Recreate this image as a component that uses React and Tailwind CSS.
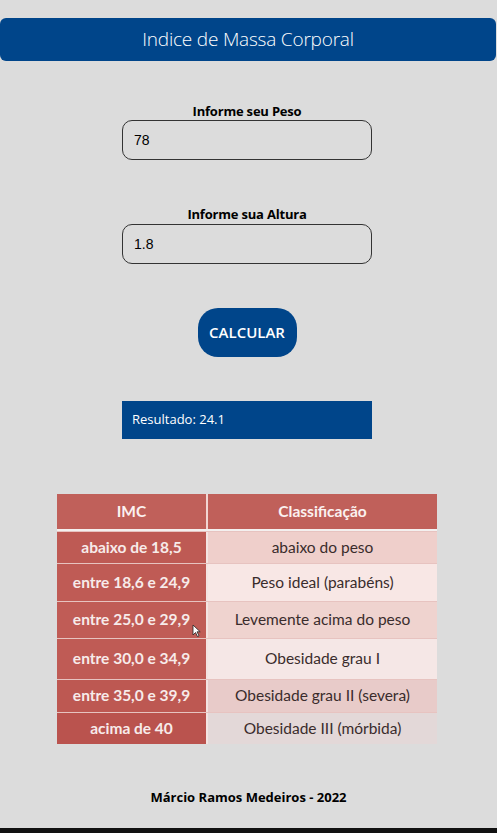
import React from "react";

const rows = [
  { imc: "abaixo de 18,5", cls: "abaixo do peso", h: "h-[32px]", bg: "bg-[#efcfcb]", lbg: "bg-[#be5a54]" },
  { imc: "entre 18,6 e 24,9", cls: "Peso ideal (parabéns)", h: "h-[38px]", bg: "bg-[#f8e7e5]", lbg: "bg-[#bf5b55]" },
  { imc: "entre 25,0 e 29,9", cls: "Levemente acima do peso", h: "h-[37px]", bg: "bg-[#efd3cf]", lbg: "bg-[#c05c56]", cursor: true },
  { imc: "entre 30,0 e 34,9", cls: "Obesidade grau I", h: "h-[41px]", bg: "bg-[#f5e7e6]", lbg: "bg-[#bf5b55]" },
  { imc: "entre 35,0 e 39,9", cls: "Obesidade grau II (severa)", h: "h-[33px]", bg: "bg-[#e8cbc9]", lbg: "bg-[#bd5852]" },
  { imc: "acima de 40", cls: "Obesidade III (mórbida)", h: "h-[32px]", bg: "bg-[#e3d8d8]", lbg: "bg-[#ba534e]" },
];

export default function App() {
  return (
    <div className="min-h-[833px] bg-[#dcdcdc] flex flex-col font-['Open_Sans',sans-serif]">
      <div className="mt-[18px] mr-px h-[43px] bg-[#00458a] rounded-[6px] flex items-center justify-center text-white text-[19px] font-light tracking-[-0.2px]">
        Indice de Massa Corporal
      </div>

      <div className="flex flex-col items-center mr-[3px]">
        <div className="mt-[42px] text-[13px] leading-[16px] font-bold text-black tracking-[-0.2px]">Informe seu Peso</div>
        <div className="mt-px w-[250px] h-[40px] border border-[#333] rounded-[10px] flex items-center px-[11px] text-[14px] text-black font-['Liberation_Sans',sans-serif]">
          78
        </div>

        <div className="mt-[46px] text-[13px] leading-[16px] font-bold text-black tracking-[-0.2px]">Informe sua Altura</div>
        <div className="mt-[2px] w-[250px] h-[40px] border border-[#333] rounded-[10px] flex items-center px-[11px] text-[14px] text-black font-['Liberation_Sans',sans-serif]">
          1.8
        </div>

        <div className="mt-[44px] w-[99px] h-[49px] rounded-[20px] bg-[#00458a] flex items-center justify-center text-white text-[15px] font-semibold">
          CALCULAR
        </div>

        <div className="mt-[44px] w-[250px] h-[38px] bg-[#00458a] flex items-center pl-[10px] text-white text-[13px]">
          Resultado: 24.1
        </div>
      </div>

      <div className="mt-[55px] ml-[57px] w-[380px] flex flex-col font-['Lato',sans-serif] text-[15.5px]">
        <div className="flex h-[35px] bg-[#c0605a] text-[#fbf1f0] font-bold">
          <div className="w-[149px] flex items-center justify-center">IMC</div>
          <div className="flex-1 flex items-center justify-center border-l-2 border-[#f2d6d3]">Classificação</div>
        </div>
        <div className="h-[2px] bg-[#f4f0ef]"></div>
        {rows.map((r, i) => (
          <div key={i} className={`flex ${r.h} border-t border-[#e7c3c0]`}>
            <div className={`relative w-[149px] ${r.lbg} flex items-center justify-center text-[#f7ebea] font-bold`}>
              {r.imc}
              {r.cursor && (
                <svg className="absolute left-[135px] top-[22px]" width="9" height="13" viewBox="0 0 9 13">
                  <path d="M1 1 L1 11 L3.5 8.5 L5.5 12.5 L7 11.8 L5 7.8 L8.2 7.8 Z" fill="#fff" stroke="#222" strokeWidth="0.8" />
                </svg>
              )}
            </div>
            <div className={`flex-1 ${r.bg} border-l-2 border-[#f4e4e2] flex items-center justify-center text-[#3a2c2c]`}>
              {r.cls}
            </div>
          </div>
        ))}
      </div>

      <div className="mt-[45px] text-center text-[13px] leading-[16px] font-bold text-black">
        Márcio Ramos Medeiros - 2022
      </div>

      <div className="mt-auto h-[5px] bg-[#111]"></div>
    </div>
  );
}
